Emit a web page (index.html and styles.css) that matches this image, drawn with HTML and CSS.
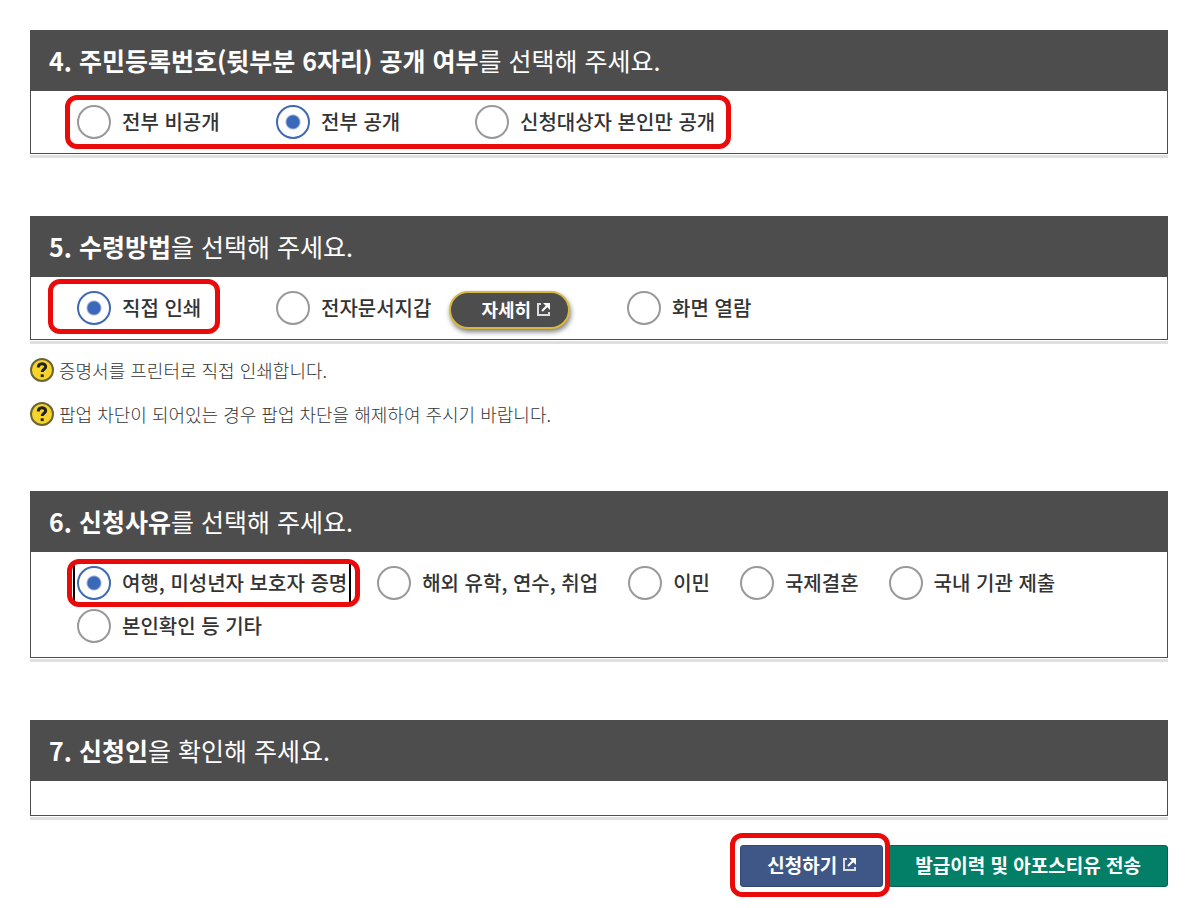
FILE: index.html
```
<!doctype html>
<html lang="ko">
	<head>
		<meta charset="UTF-8">
		<meta name="viewport" content="width=device-width, initial-scale=1">
		<title>증명서 신청</title>
		<link rel="stylesheet" href="styles.css">
	</head>
	<body>
		<form class="apply" onsubmit="return false">
			<section class="step">
				<h2><strong>4. 주민등록번호(뒷부분 6자리) 공개 여부</strong>를 선택해 주세요.</h2>
				<div class="options columns">
					<div class="group mark mark-group">
						<div class="item"><label><input type="radio" name="open">전부 비공개</label></div>
						<div class="item"><label><input type="radio" name="open" checked>전부 공개</label></div>
						<div class="item"><label><input type="radio" name="open">신청대상자 본인만 공개</label></div>
					</div>
				</div>
			</section>

			<section class="step">
				<h2><strong>5. 수령방법</strong>을 선택해 주세요.</h2>
				<div class="options columns">
					<div class="item"><label class="mark mark-wide"><input type="radio" name="receive" checked>직접 인쇄</label></div>
					<div class="item">
						<label><input type="radio" name="receive">전자문서지갑</label>
						<button type="button" class="btn-detail">자세히
							<svg class="ico" viewBox="0 0 13 13"><path d="M4 1H1v11h11V9"/><path class="shaft" d="M5 8l5-5"/><path class="fill" d="M6 0h7v7z"/></svg>
						</button>
					</div>
					<div class="item"><label><input type="radio" name="receive">화면 열람</label></div>
				</div>
			</section>
			<ul class="notes">
				<li><svg class="help" viewBox="0 0 24 24"><circle cx="12" cy="12" r="11"/><path d="M8.300 9.500c0-5 7.400-4.600 7.400-.8 0 2.600-3.500 2.500-3.500 5.300"/><path d="M12.200 16.300v2.800"/></svg>증명서를 프린터로 직접 인쇄합니다.</li>
				<li><svg class="help" viewBox="0 0 24 24"><circle cx="12" cy="12" r="11"/><path d="M8.300 9.500c0-5 7.400-4.600 7.400-.8 0 2.600-3.500 2.500-3.500 5.300"/><path d="M12.200 16.300v2.800"/></svg>팝업 차단이 되어있는 경우 팝업 차단을 해제하여 주시기 바랍니다.</li>
			</ul>

			<section class="step">
				<h2><strong>6. 신청사유</strong>를 선택해 주세요.</h2>
				<div class="options">
					<div class="item"><label class="mark mark-tight focus"><input type="radio" name="reason" checked>여행, 미성년자 보호자 증명</label></div>
					<div class="item"><label><input type="radio" name="reason">해외 유학, 연수, 취업</label></div>
					<div class="item"><label><input type="radio" name="reason">이민</label></div>
					<div class="item"><label><input type="radio" name="reason">국제결혼</label></div>
					<div class="item"><label><input type="radio" name="reason">국내 기관 제출</label></div>
					<div class="item"><label><input type="radio" name="reason">본인확인 등 기타</label></div>
				</div>
			</section>

			<section class="step">
				<h2><strong>7. 신청인</strong>을 확인해 주세요.</h2>
				<div class="blank"></div>
			</section>

			<div class="buttons">
				<button type="submit" class="btn btn-apply mark mark-btn">신청하기
					<svg class="ico" viewBox="0 0 13 13"><path d="M4 1H1v11h11V9"/><path class="shaft" d="M5 8l5-5"/><path class="fill" d="M6 0h7v7z"/></svg>
				</button>
				<button type="button" class="btn btn-send">발급이력 및 아포스티유 전송</button>
			</div>
		</form>
	</body>
</html>
```
FILE: styles.css
```
*{
	box-sizing: border-box;
}
body{
	margin: 0;
	background-color: #fff;
	color: #333;
	font-family: "Noto Sans CJK KR", sans-serif;
}
.apply{
	padding: 30px 26px 20px 30px;
}

/* 단계 */
.step{
	margin-bottom: 62px;
	border: 1px solid #4d4d4d;
	box-shadow: 0 1px 0 #fff, 0 4px 0 #e0e0e0;
}
.step h2{
	margin: 0;
	padding: 9px 18px 11px;
	background-color: #4d4d4d;
	color: #fff;
	font-size: 25px;
	font-weight: 400;
	line-height: 40px;
}
.options{
	display: flex;
	flex-wrap: wrap;
	gap: 9px 30px;
	padding: 14px 46px;
}
.group{
	display: flex;
	flex-wrap: wrap;
	gap: 9px 30px;
}
.item{
	display: flex;
	align-items: center;
	height: 34px;
}
.columns .item{
	min-width: 169px;
}
.item label{
	display: flex;
	align-items: center;
	gap: 11px;
	font-size: 20px;
	font-weight: 500;
	line-height: 34px;
	cursor: pointer;
}
.item input{
	appearance: none;
	width: 34px;
	height: 34px;
	margin: 0;
	border: 2px solid #999;
	border-radius: 50%;
	background-color: #fff;
}
.item input:checked{
	border-color: #3f69b0;
	background-image: radial-gradient(circle, #3b68b8 6px, transparent 8px);
}
.blank{
	height: 34px;
}

/* 강조 테두리 */
.mark{
	position: relative;
}
.mark::after{
	content: "";
	position: absolute;
	border: 5px solid #eb0a0a;
	border-radius: 12px;
	pointer-events: none;
}
.mark-group::after{
	inset: -10px -16px -10px -12px;
}
.mark-wide::after{
	inset: -12px -19px -9px -29px;
}
.mark-tight::after{
	inset: -7px -13px -7px -10px;
}
.mark-btn::after{
	inset: -13px -8px -11px -11px;
}
.focus{
	outline: 2px solid #000;
	outline-offset: 2px;
}

/* 안내 */
.notes{
	margin: -46px 0 63px;
	padding: 0;
	list-style: none;
}
.notes li{
	display: flex;
	align-items: center;
	gap: 5px;
	height: 28px;
	margin-bottom: 16px;
	font-size: 18px;
	font-weight: 300;
}
.help{
	width: 24px;
	height: 24px;
	fill: none;
	stroke: #222;
	stroke-width: 3;
}
.help circle{
	fill: #f7d42c;
	stroke: #6b6434;
	stroke-width: 2;
}

/* 버튼 */
button{
	color: #fff;
	font-family: inherit;
	font-size: 18px;
	font-weight: 700;
	cursor: pointer;
}
.ico{
	width: 13px;
	height: 13px;
	fill: none;
	stroke: #ddd;
	stroke-width: 2;
}
.ico .shaft{
	stroke: #fff;
}
.ico .fill{
	fill: #fff;
	stroke: none;
}
.btn-detail{
	display: flex;
	align-items: center;
	gap: 6px;
	height: 38px;
	margin: 4px 27px 0 18px;
	padding: 0 18px 2px 30px;
	border: 2px solid #d8b83c;
	border-radius: 19px;
	background-color: #4d4d4d;
	box-shadow: 1px 3px 5px rgba(0, 0, 0, .5);
}
.buttons{
	display: flex;
	flex-wrap: wrap;
	justify-content: flex-end;
	gap: 5px;
	margin-top: -33px;
}
.btn{
	display: flex;
	align-items: center;
	gap: 6px;
	height: 42px;
	padding: 0 26px 4px;
	border: 1px solid #07624f;
	border-radius: 3px;
	background-color: #037f68;
	font-size: 19px;
}
.btn-apply{
	z-index: 1;
	border-color: #33477a;
	background-color: #3e5787;
}
```
